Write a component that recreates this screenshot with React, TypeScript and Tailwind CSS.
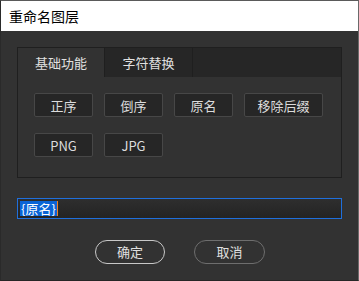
import React from "react";

const font = { fontFamily: '"Noto Sans CJK SC", "Noto Sans", sans-serif' };

function Btn({ label, w }: { label: string; w: string }) {
  return (
    <div
      className={`${w} h-[24px] flex items-center justify-center bg-[#262626] border border-[#474747] rounded-[2px] text-[13px] text-[#dcdcdc] leading-none`}
    >
      {label}
    </div>
  );
}

export default function App() {
  return (
    <div
      className="w-[359px] h-[281px] flex flex-col bg-[#323232] border-t border-t-[#5a5a5a] border-r border-r-[#6a6a6a] border-b border-b-[#262626] border-l border-l-[#2a2a2a] overflow-hidden"
      style={font}
    >
      <div className="h-[30px] bg-white flex items-center pl-[8px] text-[14px] text-black shrink-0">
        重命名图层
      </div>
      <div className="flex-1 flex flex-col px-[16px] pt-[16px]">
        <div className="h-[131px] border border-[#1f1f1f] flex flex-col">
          <div className="h-[29px] flex bg-[#262626] shrink-0">
            <div className="w-[87px] bg-[#323232] border-r border-[#1f1f1f] flex items-center justify-center text-[13px] text-[#e0e0e0]">
              基础功能
            </div>
            <div className="w-[88px] border-r border-[#1f1f1f] flex items-center justify-center text-[13px] text-[#e0e0e0]">
              字符替换
            </div>
          </div>
          <div className="flex flex-col gap-[16px] pl-[16px] pt-[16px]">
            <div className="flex gap-[11px]">
              <Btn label="正序" w="w-[59px]" />
              <Btn label="倒序" w="w-[59px]" />
              <Btn label="原名" w="w-[59px]" />
              <Btn label="移除后缀" w="w-[79px]" />
            </div>
            <div className="flex gap-[11px]">
              <Btn label="PNG" w="w-[59px]" />
              <Btn label="JPG" w="w-[59px]" />
            </div>
          </div>
        </div>
        <div className="mt-[20px] h-[21px] border border-[#1f6fdc] bg-gradient-to-b from-[#2e2e2e] to-[#242424] flex items-center pl-[2px]">
          <span className="bg-[#0a64d6] text-white text-[13px] leading-[15px] px-[1px]">{"{原名}"}</span>
          <span className="w-[1px] h-[15px] bg-[#f08020]" />
        </div>
        <div className="mt-[21px] flex justify-center gap-[29px] pl-[1px]">
          <div className="w-[70px] h-[24px] rounded-full border-[1.5px] border-[#c8c8c8] flex items-center justify-center text-[13px] text-[#e0e0e0]">
            确定
          </div>
          <div className="w-[71px] h-[24px] rounded-full border-[1.5px] border-[#6e6e6e] flex items-center justify-center text-[13px] text-[#e0e0e0]">
            取消
          </div>
        </div>
      </div>
    </div>
  );
}
